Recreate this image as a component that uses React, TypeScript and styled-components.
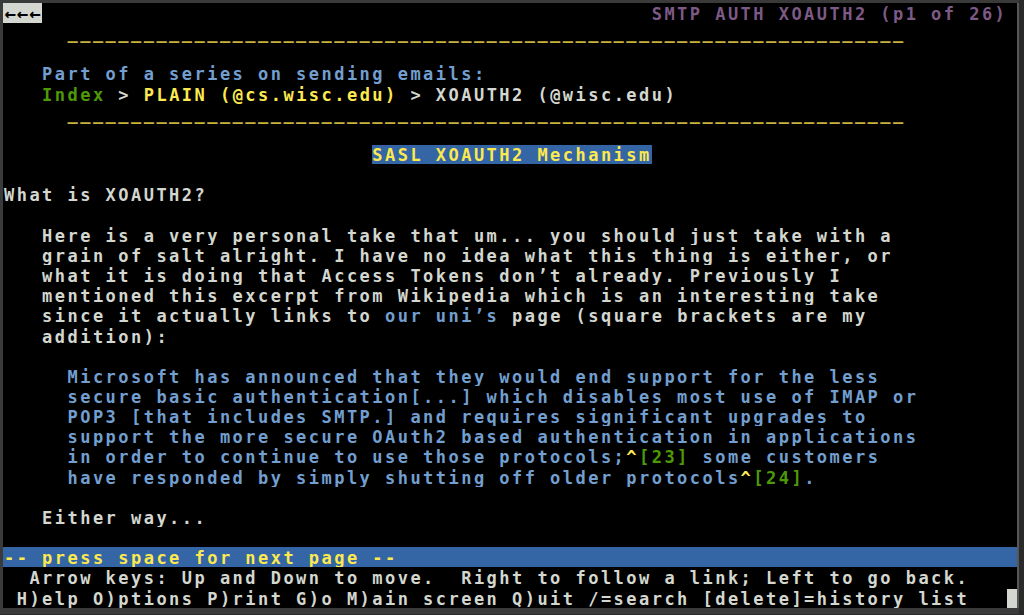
import React from "react";
import styled, { createGlobalStyle } from "styled-components";

const CELL = 12.7;
const FONT = 17;
const ADV = 0.60205 * FONT;

const Global = createGlobalStyle`
  html, body { margin: 0; padding: 0; background: #2e2e2e; }
  body { width: 1024px; height: 615px; overflow: hidden; }
`;

const palette = {
  gray: "#d3d7cf",
  blue: "#729fcf",
  green: "#4e9a06",
  yellow: "#fce94f",
  rule: "#c8b43c",
  purple: "#7d5a86",
  black: "#000000",
  bar: "#3465a4",
  light: "#d3d7cf",
} as const;

type Tone = keyof typeof palette;

const Frame = styled.div`
  box-sizing: border-box;
  width: 1024px;
  height: 615px;
  padding: 3px 0 0 3px;
  background: #3a3a3a;
  display: flex;
  border-right: 5px solid #2a2a2a;
  border-bottom: 1px solid #2a2a2a;
`;

const Screen = styled.div`
  flex: 1;
  height: 605px;
  background: #000;
  overflow: hidden;
  border-right: 2px solid #575757;
  display: flex;
  flex-direction: column;
`;

const Row = styled.div<{ $bg?: Tone; $rule?: boolean }>`
  height: 20.17px;
  flex: none;
  line-height: ${(p) => (p.$rule ? "20.17px" : "22px")};
  padding-left: 1px;
  white-space: pre;
  font-family: "DejaVu Sans Mono", "Liberation Mono", monospace;
  font-weight: bold;
  font-size: ${FONT}px;
  letter-spacing: ${CELL - ADV}px;
  color: ${palette.gray};
  background: ${(p) => (p.$bg ? palette[p.$bg] : "transparent")};
  overflow: hidden;
`;

const Seg = styled.span<{ $fg?: Tone; $bg?: Tone }>`
  color: ${(p) => (p.$fg ? palette[p.$fg] : "inherit")};
  background: ${(p) => (p.$bg ? palette[p.$bg] : "transparent")};
`;

const BackBox = styled.span`
  display: inline-block;
  vertical-align: top;
  width: ${CELL * 3}px;
  height: 20.17px;
  line-height: 20.17px;
  margin-left: -1px;
  padding-left: 1px;
  background: ${palette.light};
  color: #000;
  font-size: 19px;
  letter-spacing: 1px;
  text-align: center;
`;

type Part = { t: string; fg?: Tone; bg?: Tone; back?: boolean };
type Line = { parts: Part[]; bg?: Tone; rule?: boolean };

const sp = (n: number) => " ".repeat(n);
const rule: Line = {
  parts: [{ t: sp(5) }, { t: "_".repeat(66), fg: "rule" }],
  rule: true,
};
const empty: Line = { parts: [{ t: "" }] };
const plain = (t: string, fg?: Tone): Line => ({ parts: [{ t, fg }] });

const lines: Line[] = [
  {
    parts: [
      { t: "←←←", back: true },
      { t: sp(48) },
      { t: "SMTP AUTH XOAUTH2 (p1 of 26)", fg: "purple" },
    ],
  },
  rule,
  empty,
  plain("   Part of a series on sending emails:", "blue"),
  {
    parts: [
      { t: sp(3) },
      { t: "Index", fg: "green" },
      { t: " > " },
      { t: "PLAIN (@cs.wisc.edu)", fg: "yellow" },
      { t: " > XOAUTH2 (@wisc.edu)" },
    ],
  },
  rule,
  empty,
  {
    parts: [
      { t: sp(29) },
      { t: "SASL XOAUTH2 Mechanism", fg: "yellow", bg: "bar" },
    ],
  },
  empty,
  plain("What is XOAUTH2?"),
  empty,
  plain("   Here is a very personal take that um... you should just take with a"),
  plain("   grain of salt alright. I have no idea what this thing is either, or"),
  plain("   what it is doing that Access Tokens don’t already. Previously I"),
  plain("   mentioned this excerpt from Wikipedia which is an interesting take"),
  {
    parts: [
      { t: "   since it actually links to " },
      { t: "our uni’s", fg: "blue" },
      { t: " page (square brackets are my" },
    ],
  },
  plain("   addition):"),
  empty,
  plain("     Microsoft has announced that they would end support for the less", "blue"),
  plain("     secure basic authentication[...] which disables most use of IMAP or", "blue"),
  plain("     POP3 [that includes SMTP.] and requires significant upgrades to", "blue"),
  plain("     support the more secure OAuth2 based authentication in applications", "blue"),
  {
    parts: [
      { t: "     in order to continue to use those protocols;", fg: "blue" },
      { t: "^", fg: "yellow" },
      { t: "[23]", fg: "green" },
      { t: " some customers", fg: "blue" },
    ],
  },
  {
    parts: [
      { t: "     have responded by simply shutting off older protocols", fg: "blue" },
      { t: "^", fg: "yellow" },
      { t: "[24]", fg: "green" },
      { t: ".", fg: "blue" },
    ],
  },
  empty,
  plain("   Either way..."),
  empty,
  { parts: [{ t: "-- press space for next page --", fg: "yellow" }], bg: "bar" },
  plain("  Arrow keys: Up and Down to move.  Right to follow a link; Left to go back."),
  {
    parts: [
      { t: " H)elp O)ptions P)rint G)o M)ain screen Q)uit /=search [delete]=history list" },
      { t: sp(3) },
      { t: " ", bg: "light" },
    ],
  },
];

export default function App() {
  return (
    <>
      <Global />
      <Frame>
        <Screen>
          {lines.map((line, i) => (
            <Row key={i} $bg={line.bg} $rule={line.rule}>
              {line.parts.map((p, j) =>
                p.back ? (
                  <BackBox key={j}>{p.t}</BackBox>
                ) : (
                  <Seg key={j} $fg={p.fg} $bg={p.bg}>
                    {p.t}
                  </Seg>
                )
              )}
            </Row>
          ))}
        </Screen>
      </Frame>
    </>
  );
}
